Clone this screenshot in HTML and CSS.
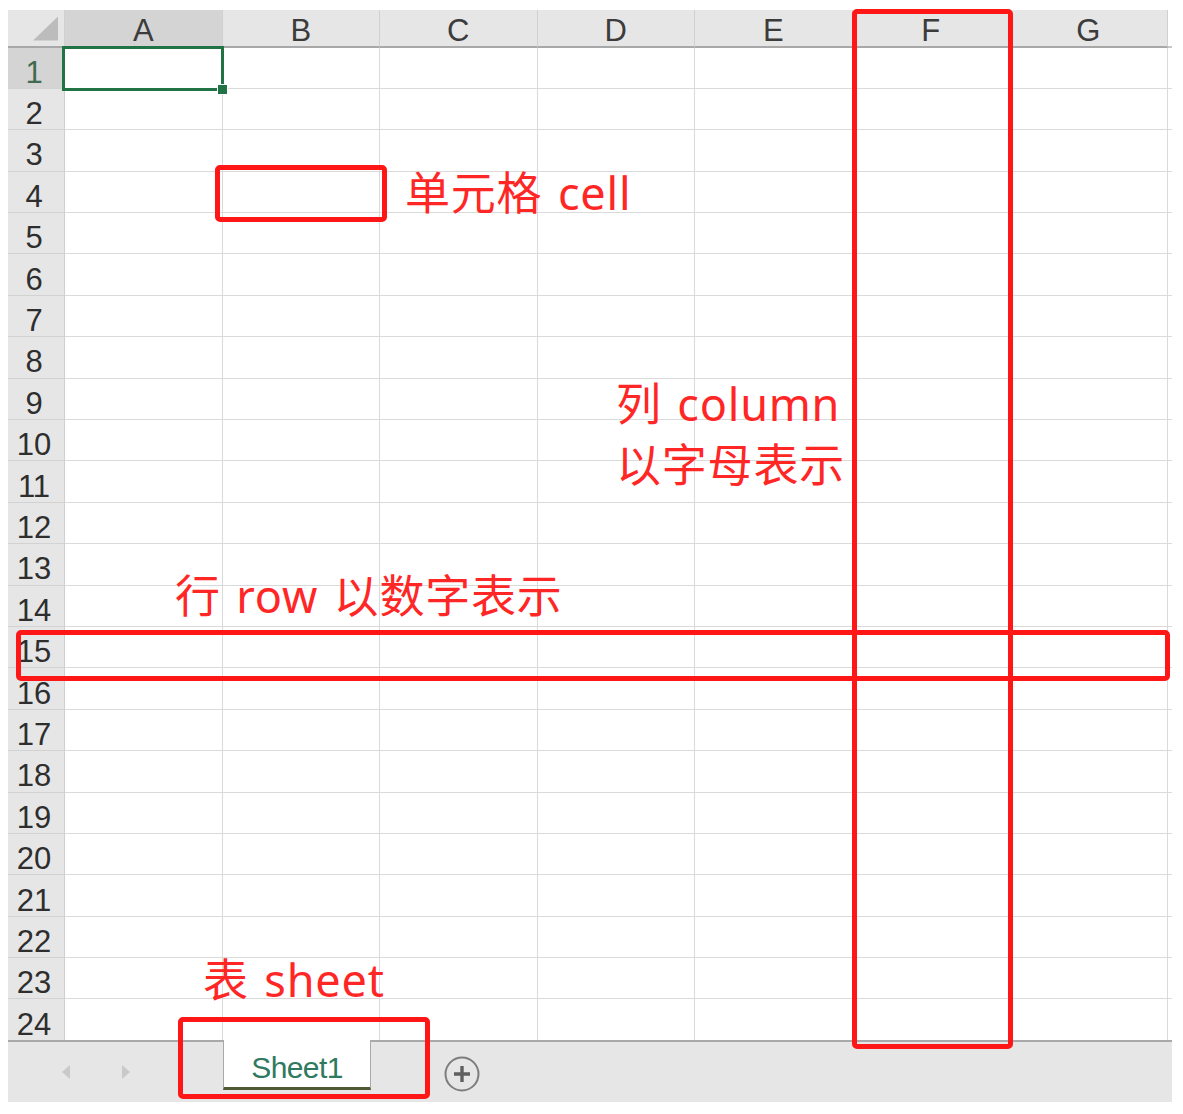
FILE: index.html
```html
<!DOCTYPE html>
<html lang="zh-CN">
<head>
<meta charset="utf-8">
<title>Excel 基本概念</title>
<link rel="stylesheet" href="styles.css">
</head>
<body>
<div class="page">
  <div class="sheet">
    <div class="grid">
      <div class="corner"></div><div class="ch sel">A</div><div class="ch">B</div><div class="ch">C</div><div class="ch">D</div><div class="ch">E</div><div class="ch">F</div><div class="ch">G</div><div class="ch x"></div>
      <div class="rh sel">1</div><div class="c"></div><div class="c"></div><div class="c"></div><div class="c"></div><div class="c"></div><div class="c"></div><div class="c"></div><div class="c x"></div>
      <div class="rh">2</div><div class="c"></div><div class="c"></div><div class="c"></div><div class="c"></div><div class="c"></div><div class="c"></div><div class="c"></div><div class="c x"></div>
      <div class="rh">3</div><div class="c"></div><div class="c"></div><div class="c"></div><div class="c"></div><div class="c"></div><div class="c"></div><div class="c"></div><div class="c x"></div>
      <div class="rh">4</div><div class="c"></div><div class="c"></div><div class="c"></div><div class="c"></div><div class="c"></div><div class="c"></div><div class="c"></div><div class="c x"></div>
      <div class="rh">5</div><div class="c"></div><div class="c"></div><div class="c"></div><div class="c"></div><div class="c"></div><div class="c"></div><div class="c"></div><div class="c x"></div>
      <div class="rh">6</div><div class="c"></div><div class="c"></div><div class="c"></div><div class="c"></div><div class="c"></div><div class="c"></div><div class="c"></div><div class="c x"></div>
      <div class="rh">7</div><div class="c"></div><div class="c"></div><div class="c"></div><div class="c"></div><div class="c"></div><div class="c"></div><div class="c"></div><div class="c x"></div>
      <div class="rh">8</div><div class="c"></div><div class="c"></div><div class="c"></div><div class="c"></div><div class="c"></div><div class="c"></div><div class="c"></div><div class="c x"></div>
      <div class="rh">9</div><div class="c"></div><div class="c"></div><div class="c"></div><div class="c"></div><div class="c"></div><div class="c"></div><div class="c"></div><div class="c x"></div>
      <div class="rh">10</div><div class="c"></div><div class="c"></div><div class="c"></div><div class="c"></div><div class="c"></div><div class="c"></div><div class="c"></div><div class="c x"></div>
      <div class="rh">11</div><div class="c"></div><div class="c"></div><div class="c"></div><div class="c"></div><div class="c"></div><div class="c"></div><div class="c"></div><div class="c x"></div>
      <div class="rh">12</div><div class="c"></div><div class="c"></div><div class="c"></div><div class="c"></div><div class="c"></div><div class="c"></div><div class="c"></div><div class="c x"></div>
      <div class="rh">13</div><div class="c"></div><div class="c"></div><div class="c"></div><div class="c"></div><div class="c"></div><div class="c"></div><div class="c"></div><div class="c x"></div>
      <div class="rh">14</div><div class="c"></div><div class="c"></div><div class="c"></div><div class="c"></div><div class="c"></div><div class="c"></div><div class="c"></div><div class="c x"></div>
      <div class="rh">15</div><div class="c"></div><div class="c"></div><div class="c"></div><div class="c"></div><div class="c"></div><div class="c"></div><div class="c"></div><div class="c x"></div>
      <div class="rh">16</div><div class="c"></div><div class="c"></div><div class="c"></div><div class="c"></div><div class="c"></div><div class="c"></div><div class="c"></div><div class="c x"></div>
      <div class="rh">17</div><div class="c"></div><div class="c"></div><div class="c"></div><div class="c"></div><div class="c"></div><div class="c"></div><div class="c"></div><div class="c x"></div>
      <div class="rh">18</div><div class="c"></div><div class="c"></div><div class="c"></div><div class="c"></div><div class="c"></div><div class="c"></div><div class="c"></div><div class="c x"></div>
      <div class="rh">19</div><div class="c"></div><div class="c"></div><div class="c"></div><div class="c"></div><div class="c"></div><div class="c"></div><div class="c"></div><div class="c x"></div>
      <div class="rh">20</div><div class="c"></div><div class="c"></div><div class="c"></div><div class="c"></div><div class="c"></div><div class="c"></div><div class="c"></div><div class="c x"></div>
      <div class="rh">21</div><div class="c"></div><div class="c"></div><div class="c"></div><div class="c"></div><div class="c"></div><div class="c"></div><div class="c"></div><div class="c x"></div>
      <div class="rh">22</div><div class="c"></div><div class="c"></div><div class="c"></div><div class="c"></div><div class="c"></div><div class="c"></div><div class="c"></div><div class="c x"></div>
      <div class="rh">23</div><div class="c"></div><div class="c"></div><div class="c"></div><div class="c"></div><div class="c"></div><div class="c"></div><div class="c"></div><div class="c x"></div>
      <div class="rh">24</div><div class="c"></div><div class="c"></div><div class="c"></div><div class="c"></div><div class="c"></div><div class="c"></div><div class="c"></div><div class="c x"></div>
    </div>
    <div class="tabbar">
      <div class="nav">
        <span class="arrow left"></span>
        <span class="arrow right"></span>
      </div>
      <div class="tab">Sheet1</div>
      <div class="add">
        <svg width="38" height="38" viewBox="0 0 38 38" aria-hidden="true">
          <circle cx="19" cy="19" r="16.5" fill="none" stroke="#7d7d7d" stroke-width="2"/>
          <path d="M19 11v16M11 19h16" stroke="#5f5f5f" stroke-width="3.4" fill="none"/>
        </svg>
      </div>
    </div>
  </div>

  <div class="select-box"><span class="handle"></span></div>

  <div class="mark mark-cell"></div>
  <div class="mark mark-col"></div>
  <div class="mark mark-row"></div>
  <div class="mark mark-tab"></div>

  <div class="note note-cell">单元格 cell</div>
  <div class="note note-col">列 column<br>以字母表示</div>
  <div class="note note-row">行 row 以数字表示</div>
  <div class="note note-sheet">表 sheet</div>
</div>
</body>
</html>
```

FILE: styles.css
```css
html, body {
  margin: 0;
  padding: 0;
  background: #ffffff;
}

.page {
  position: relative;
  width: 1183px;
  height: 1114px;
  overflow: hidden;
  font-family: "Liberation Sans", Arial, sans-serif;
}

.sheet {
  margin: 10px 0 0 8px;
  width: 1164px;
}

.grid {
  display: grid;
  grid-template-columns: 57px repeat(7, 157.5px) 1fr;
  grid-template-rows: 37.5px;
  grid-auto-rows: 41.4px;
  height: 1030px;
  overflow: hidden;
}

.grid > div {
  box-sizing: border-box;
}

.c {
  border-right: 1px solid #dadada;
  border-bottom: 1px solid #dadada;
  background: #ffffff;
}

.c.x {
  border-right: none;
}

.corner {
  position: relative;
  background: #e6e6e6;
  border-right: 1px solid #d0d0d0;
  border-bottom: 2px solid #a8a8a8;
}

.corner::after {
  content: "";
  position: absolute;
  right: 6px;
  bottom: 5px;
  width: 25px;
  height: 24px;
  background: #bcbcbc;
  clip-path: polygon(100% 0, 100% 100%, 0 100%);
}

.ch {
  background: #e6e6e6;
  border-right: 1px solid #d0d0d0;
  border-bottom: 2px solid #a8a8a8;
  display: flex;
  align-items: center;
  justify-content: center;
  font-size: 31px;
  color: #3c3c3c;
  padding-top: 6px;
}

.ch.x {
  border-right: none;
  background: #ffffff;
  border-bottom: 2px solid #c8c8c8;
}

.rh {
  background: #e6e6e6;
  border-right: 1px solid #cfcfcf;
  border-bottom: 1px solid #d2d2d2;
  display: flex;
  align-items: center;
  justify-content: center;
  padding: 10px 4px 0 0;
  font-size: 31px;
  color: #2e2e2e;
}

.ch.sel,
.rh.sel {
  background: #d4d4d4;
}

.rh.sel {
  color: #3f6b50;
}

.tabbar {
  height: 62px;
  box-sizing: border-box;
  background: #e6e6e6;
  border-top: 2px solid #a9a9a9;
  display: flex;
  align-items: stretch;
}

.nav {
  width: 215px;
  display: flex;
  align-items: center;
  gap: 52px;
  padding-left: 54px;
  box-sizing: border-box;
}

.arrow {
  width: 0;
  height: 0;
  border-top: 7px solid transparent;
  border-bottom: 7px solid transparent;
}

.arrow.left {
  border-right: 8px solid #c9c9c9;
}

.arrow.right {
  border-left: 8px solid #c9c9c9;
}

.tab {
  width: 148px;
  height: 50px;
  margin-top: -2px;
  background: #ffffff;
  border-left: 1px solid #a9a9a9;
  border-right: 1px solid #a9a9a9;
  border-bottom: 3px solid #4f5a33;
  box-sizing: border-box;
  display: flex;
  align-items: center;
  justify-content: center;
  padding-top: 8px;
  font-size: 30px;
  letter-spacing: -0.6px;
  color: #2f7a5f;
}

.add {
  display: flex;
  align-items: center;
  padding-left: 72px;
  padding-top: 3px;
}

.select-box {
  position: absolute;
  left: 62px;
  top: 46px;
  width: 162px;
  height: 45px;
  box-sizing: border-box;
  border: 3px solid #217346;
}

.handle {
  position: absolute;
  right: -7px;
  bottom: -7px;
  width: 9px;
  height: 9px;
  background: #217346;
  border: 1px solid #ffffff;
}

.mark {
  position: absolute;
  box-sizing: border-box;
  border: 5px solid #ff1717;
  border-radius: 5px;
}

.mark-cell {
  left: 215px;
  top: 165px;
  width: 172px;
  height: 57px;
}

.mark-col {
  left: 852px;
  top: 9px;
  width: 161px;
  height: 1040px;
}

.mark-row {
  left: 16px;
  top: 630px;
  width: 1154px;
  height: 51px;
}

.mark-tab {
  left: 178px;
  top: 1017px;
  width: 252px;
  height: 82px;
}

.note {
  position: absolute;
  font-family: "Noto Sans", "Noto Sans CJK SC", sans-serif;
  font-size: 45px;
  line-height: 1;
  letter-spacing: 0.8px;
  word-spacing: 3px;
  color: #ff2626;
  white-space: nowrap;
}

.note-cell {
  left: 405px;
  top: 170px;
}

.note-col {
  left: 616px;
  top: 373px;
  line-height: 61px;
}

.note-row {
  left: 175px;
  top: 573px;
}

.note-sheet {
  left: 203px;
  top: 957px;
}
```
